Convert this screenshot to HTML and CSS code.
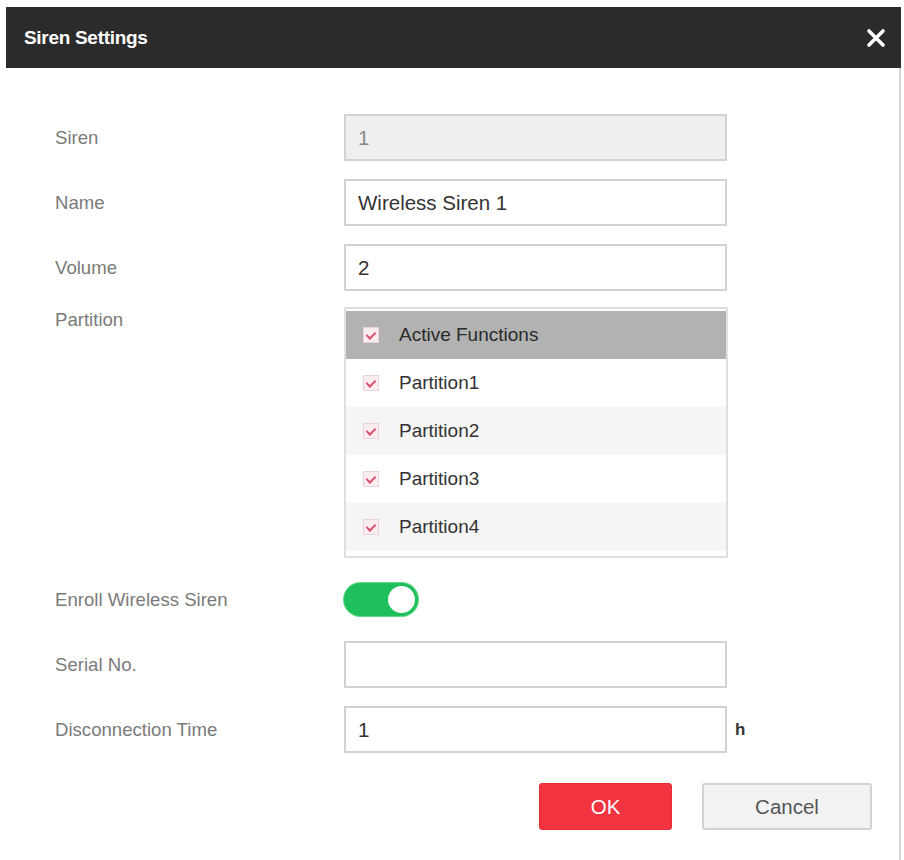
FILE: index.html
```html
<!DOCTYPE html>
<html lang="en">
<head>
  <meta charset="UTF-8" />
  <meta name="viewport" content="width=device-width, initial-scale=1.0"/>
  <title>Siren Settings</title>
  <link rel="stylesheet" href="styles.css">
</head>
<body>

  <div class="dialog">
    <div class="dialog-head">
      <span class="dialog-title">Siren Settings</span>
      <svg class="close" width="20" height="20" viewBox="0 0 20 20">
        <path d="M3 3 L17 17 M17 3 L3 17" stroke="#fff" stroke-width="3.6" stroke-linecap="round"/>
      </svg>
    </div>

    <div class="dialog-body">
      <div class="row">
        <label>Siren</label>
        <input class="field disabled" value="1" disabled>
      </div>
      <div class="row">
        <label>Name</label>
        <input class="field" value="Wireless Siren 1">
      </div>
      <div class="row">
        <label>Volume</label>
        <input class="field" value="2">
      </div>
      <div class="row row-top">
        <label>Partition</label>
        <ul class="parts">
          <li class="parts-head"><span class="check"></span>Active Functions</li>
          <li><span class="check"></span>Partition1</li>
          <li class="alt"><span class="check"></span>Partition2</li>
          <li><span class="check"></span>Partition3</li>
          <li class="alt"><span class="check"></span>Partition4</li>
        </ul>
      </div>
      <div class="row">
        <label>Enroll Wireless Siren</label>
        <span class="toggle on"><span class="knob"></span></span>
      </div>
      <div class="row">
        <label>Serial No.</label>
        <input class="field" value="">
      </div>
      <div class="row">
        <label>Disconnection Time</label>
        <input class="field" value="1">
        <span class="unit">h</span>
      </div>

      <div class="actions">
        <button class="btn btn-ok">OK</button>
        <button class="btn btn-cancel">Cancel</button>
      </div>
    </div>
  </div>

</body>
</html>
```

FILE: styles.css
```css
body {
  margin: 0;
  background: #fff;
  font-family: "Liberation Sans", Arial, sans-serif;
}
.dialog {
  margin: 7px 0 0 6px;
  width: 895px;
  height: 853px;
  border-right: 2px solid #d6d6d6;
  box-sizing: border-box;
}
.dialog-head {
  height: 61px;
  background: #2b2b2b;
  display: flex;
  align-items: center;
  justify-content: space-between;
  padding: 0 15px 0 18px;
  margin-right: -2px;
}
.dialog-title {
  color: #fff;
  font-weight: bold;
  font-size: 19px;
  letter-spacing: -0.3px;
}
.dialog-body {
  padding: 46px 27px 0 49px;
  display: flex;
  flex-direction: column;
  gap: 18px;
}
.row {
  display: flex;
  align-items: center;
  min-height: 47px;
}
.row-top {
  align-items: flex-start;
  margin-top: -2px;
}
.row label {
  width: 289px;
  flex: none;
  font-size: 18.6px;
  color: #7a7a7a;
}
.row-top label {
  margin-top: 2px;
}
.field {
  width: 383px;
  height: 47px;
  box-sizing: border-box;
  border: 2px solid #d2d2d2;
  padding: 0 12px;
  font-family: inherit;
  font-size: 20.5px;
  color: #333;
  background: #fff;
  outline: none;
}
.field.disabled {
  background: #efefef;
  color: #888;
}
.unit {
  margin-left: 8px;
  font-weight: bold;
  font-size: 17px;
  color: #333;
}

/* partition list */
.parts {
  list-style: none;
  margin: 0;
  padding: 2px 0 5px;
  width: 384px;
  box-sizing: border-box;
  border: 2px solid #e0e0e0;
}
.parts li {
  height: 48px;
  display: flex;
  align-items: center;
  padding-left: 17px;
  font-size: 19px;
  color: #333;
}
.parts li.alt {
  background: #f5f5f5;
}
.parts li.parts-head {
  background: #b2b2b2;
  color: #2a2a2a;
}
.check {
  width: 16px;
  height: 16px;
  box-sizing: border-box;
  border: 1px solid #ead3d8;
  background: #fbecef;
  margin-right: 20px;
  position: relative;
}
.check::after {
  content: "";
  position: absolute;
  left: 4px;
  top: 2px;
  width: 4px;
  height: 7px;
  border: solid #dc4a68;
  border-width: 0 2px 2px 0;
  transform: rotate(45deg);
}

/* switch */
.toggle {
  width: 74px;
  height: 33px;
  border-radius: 17px;
  background: #1fbf5c;
  box-shadow: 0 0 0 1px #5fd88a;
  position: relative;
}
.toggle .knob {
  position: absolute;
  right: 3px;
  top: 3px;
  width: 27px;
  height: 27px;
  border-radius: 50%;
  background: #fff;
}

/* buttons */
.actions {
  display: flex;
  justify-content: flex-end;
  gap: 30px;
  margin-top: 12px;
}
.btn {
  height: 47px;
  border-radius: 3px;
  font-family: inherit;
  font-size: 20.5px;
  cursor: pointer;
}
.btn-ok {
  width: 133px;
  background: #f1343f;
  border: 1px solid #e62d38;
  color: #fff;
}
.btn-cancel {
  width: 170px;
  background: #f2f2f2;
  border: 2px solid #d2d2d2;
  color: #555;
}
```
